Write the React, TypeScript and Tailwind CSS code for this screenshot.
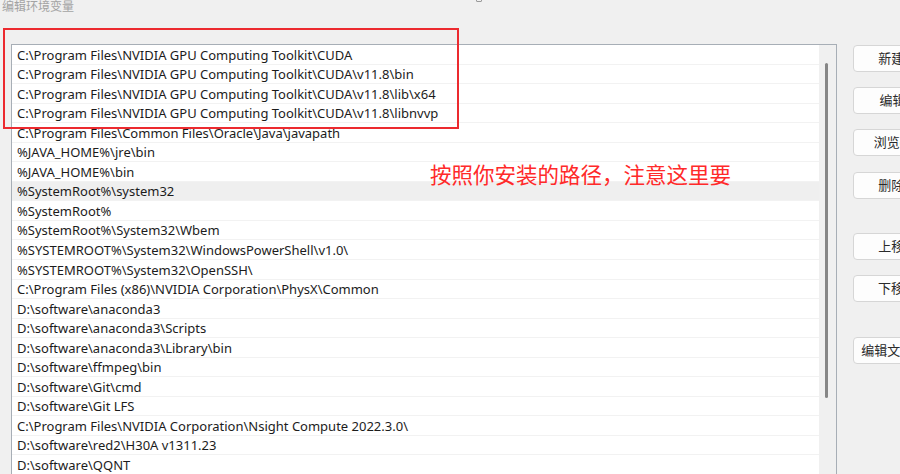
import React from 'react';

const paths = [
    'C:\\Program Files\\NVIDIA GPU Computing Toolkit\\CUDA',
    'C:\\Program Files\\NVIDIA GPU Computing Toolkit\\CUDA\\v11.8\\bin',
    'C:\\Program Files\\NVIDIA GPU Computing Toolkit\\CUDA\\v11.8\\lib\\x64',
    'C:\\Program Files\\NVIDIA GPU Computing Toolkit\\CUDA\\v11.8\\libnvvp',
    'C:\\Program Files\\Common Files\\Oracle\\Java\\javapath',
    '%JAVA_HOME%\\jre\\bin',
    '%JAVA_HOME%\\bin',
    '%SystemRoot%\\system32',
    '%SystemRoot%',
    '%SystemRoot%\\System32\\Wbem',
    '%SYSTEMROOT%\\System32\\WindowsPowerShell\\v1.0\\',
    '%SYSTEMROOT%\\System32\\OpenSSH\\',
    'C:\\Program Files (x86)\\NVIDIA Corporation\\PhysX\\Common',
    'D:\\software\\anaconda3',
    'D:\\software\\anaconda3\\Scripts',
    'D:\\software\\anaconda3\\Library\\bin',
    'D:\\software\\ffmpeg\\bin',
    'D:\\software\\Git\\cmd',
    'D:\\software\\Git LFS',
    'C:\\Program Files\\NVIDIA Corporation\\Nsight Compute 2022.3.0\\',
    'D:\\software\\red2\\H30A v1311.23',
    'D:\\software\\QQNT',
];

const buttons = [
    { label: '新建(N)', mt: 'mt-0' },
    { label: '编辑(E)', mt: 'mt-[15px]' },
    { label: '浏览(B)...', mt: 'mt-[15px]' },
    { label: '删除(D)', mt: 'mt-[16px]' },
    { label: '上移(U)', mt: 'mt-[34px]' },
    { label: '下移(O)', mt: 'mt-[15px]' },
    { label: '编辑文本(T)...', mt: 'mt-[35px]' },
];

const font = 'font-["Microsoft_YaHei","Noto_Sans","Noto_Sans_CJK_SC",sans-serif]';

export default function App() {
    return (
        <div className={`relative w-[900px] h-[474px] overflow-hidden bg-[#f0f0f0] ${font}`}>
            {/* Window title */}
            <div className="absolute left-[2px] top-0 text-[12px] leading-[14px] text-[#a3a3a3]">编辑环境变量</div>
            <div className="absolute left-[476px] -top-[3px] w-[6px] h-[5px] border border-[#9a9a9a] rounded-[1px]" />

            <div className="flex pt-[44px]">
                {/* Path list */}
                <div className="ml-[11px] w-[826px] h-[440px] shrink-0 flex border border-[#a7aeb6] bg-white">
                    <div className="flex-1 flex flex-col">
                        {paths.map((p, i) => (
                            <div
                                key={i}
                                className={`h-[19.55px] shrink-0 flex items-center pl-[5px] pt-[2px] border-b border-[#f2f2f2] text-[13px] text-[#1c1c1c] whitespace-nowrap ${i === 7 ? 'bg-[#efefef]' : ''}`}
                            >
                                {p}
                            </div>
                        ))}
                    </div>
                    {/* Scrollbar */}
                    <div className="w-[17px] shrink-0 bg-[#f0f0f0] flex justify-center pt-[18px]">
                        <div className="w-[3px] h-[335px] rounded-full bg-[#868686] -translate-x-[1px]" />
                    </div>
                </div>

                {/* Buttons */}
                <div className="ml-[16px] shrink-0 flex flex-col pt-[1px]">
                    {buttons.map((b) => (
                        <div
                            key={b.label}
                            className={`${b.mt} w-[94px] h-[27px] flex items-center justify-center rounded-[4px] border border-[#d6d6d6] bg-[#fdfdfd] text-[13px] text-[#2a2a2a] whitespace-nowrap`}
                        >
                            {b.label}
                        </div>
                    ))}
                </div>
            </div>

            {/* Annotation */}
            <div className="absolute left-[3px] top-[28px] w-[456px] h-[101px] border-2 border-[#ec2a2f]" />
            <div className="absolute left-[430px] top-[160px] text-[21.5px] leading-[30px] text-[#ff2a2a] whitespace-nowrap">
                按照你安装的路径，注意这里要
            </div>
        </div>
    );
}
